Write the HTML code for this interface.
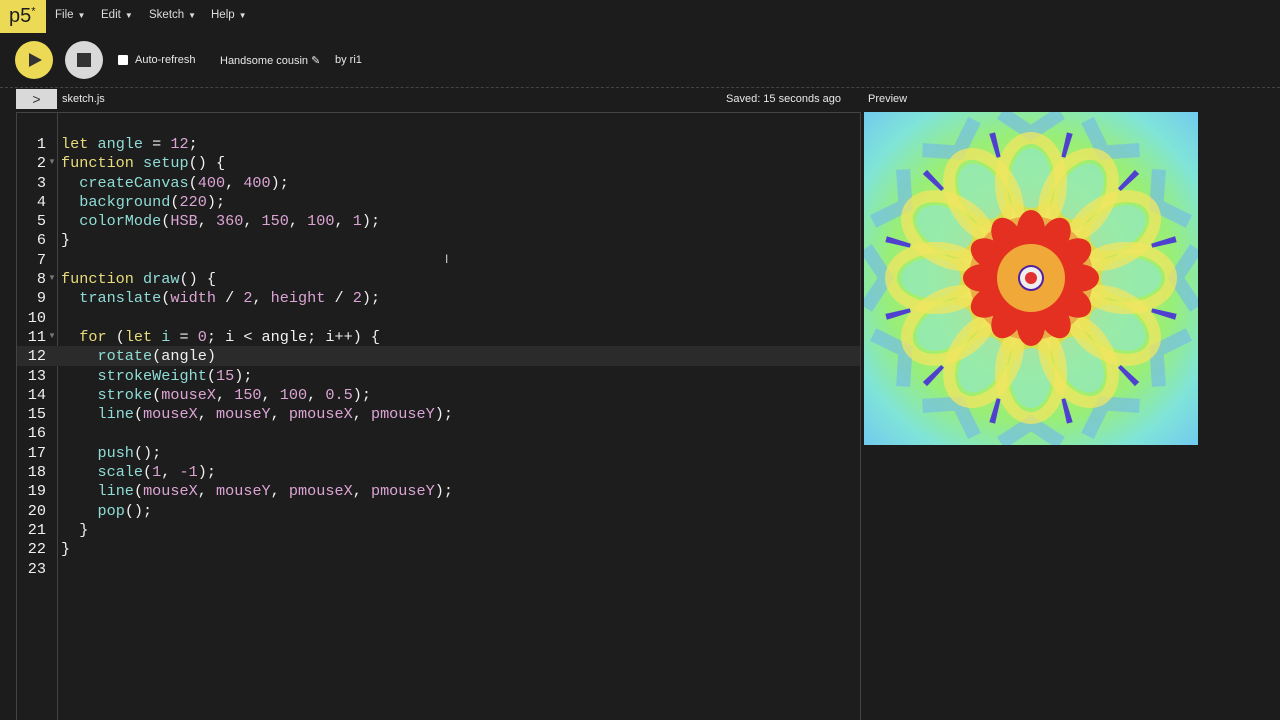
<!DOCTYPE html>
<html><head><meta charset="utf-8"><style>
*{margin:0;padding:0;box-sizing:border-box}
body{width:1280px;height:720px;background:#1c1c1c;font-family:"Liberation Sans",sans-serif;color:#e8e8e8;position:relative;overflow:hidden}
.abs{position:absolute}
.logo{left:0;top:0;width:46px;height:33px;background:#ecd956;color:#1c1c1c;font-size:20px;padding:5px 0 0 9px}
.logo sup{font-size:11px}
.menu{top:9px;font-size:11.5px;color:#ddd}
.menu span{font-size:8px;margin-left:4px}
.btn{border-radius:50%;width:38px;height:38px;top:41px}
.code{left:61px;top:135px;font-family:"Liberation Mono",monospace;font-size:15.2px;line-height:19.3px;white-space:pre;color:#f0f0f0}
.nums{left:18px;width:28px;top:135px;font-family:"Liberation Mono",monospace;font-size:15.2px;line-height:19.3px;text-align:right;color:#f0f0f0}
.k{color:#e8dc7a}.f{color:#8fdcd6}.n{color:#dca4d4}
.tri{font-size:8px;color:#777;left:48px}
</style></head><body>
<div class="abs logo">p5<sup>*</sup></div>
<div class="abs menu" style="left:55px">File<span>▼</span></div>
<div class="abs menu" style="left:101px">Edit<span>▼</span></div>
<div class="abs menu" style="left:149px">Sketch<span>▼</span></div>
<div class="abs menu" style="left:211px">Help<span>▼</span></div>
<div class="abs btn" style="left:15px;background:#ecd956"><div class="abs" style="left:14px;top:12px;border-left:13px solid #333;border-top:7px solid transparent;border-bottom:7px solid transparent"></div></div>
<div class="abs btn" style="left:65px;background:#d9d9d9"><div class="abs" style="left:12px;top:12px;width:14px;height:14px;background:#333"></div></div>
<div class="abs" style="left:118px;top:55px;width:10px;height:10px;background:#fff;border-radius:1px"></div>
<div class="abs" style="left:135px;top:54px;font-size:11px">Auto-refresh</div>
<div class="abs" style="left:220px;top:54px;font-size:11px">Handsome cousin ✎</div>
<div class="abs" style="left:335px;top:54px;font-size:11px">by ri1</div>
<div class="abs" style="left:0;top:87px;width:1280px;border-top:1px dashed #444"></div>
<div class="abs" style="left:16px;top:89px;width:41px;height:20px;background:#d9d9d9;color:#333;font-size:14px;text-align:center;line-height:20px">&gt;</div>
<div class="abs" style="left:62px;top:93px;font-size:11px">sketch.js</div>
<div class="abs" style="left:726px;top:93px;font-size:11px">Saved: 15 seconds ago</div>
<div class="abs" style="left:868px;top:93px;font-size:11px">Preview</div>
<div class="abs" style="left:16px;top:112px;width:845px;height:608px;background:#1d1d1d;border:1px solid #444;border-bottom:none"></div>
<div class="abs" style="left:57px;top:113px;width:1px;height:607px;background:#444"></div>
<div class="abs" style="left:17px;top:346px;width:843px;height:20px;background:#2b2b2b"></div>
<div class="abs nums">1<br>2<br>3<br>4<br>5<br>6<br>7<br>8<br>9<br>10<br>11<br>12<br>13<br>14<br>15<br>16<br>17<br>18<br>19<br>20<br>21<br>22<br>23</div>
<div class="abs tri" style="top:157px">▼</div>
<div class="abs tri" style="top:273px">▼</div>
<div class="abs tri" style="top:331px">▼</div>
<div class="abs code"><span class="k">let</span> <span class="f">angle</span> = <span class="n">12</span>;
<span class="k">function</span> <span class="f">setup</span>() {
  <span class="f">createCanvas</span>(<span class="n">400</span>, <span class="n">400</span>);
  <span class="f">background</span>(<span class="n">220</span>);
  <span class="f">colorMode</span>(<span class="n">HSB</span>, <span class="n">360</span>, <span class="n">150</span>, <span class="n">100</span>, <span class="n">1</span>);
}

<span class="k">function</span> <span class="f">draw</span>() {
  <span class="f">translate</span>(<span class="n">width</span> / <span class="n">2</span>, <span class="n">height</span> / <span class="n">2</span>);

  <span class="k">for</span> (<span class="k">let</span> <span class="f">i</span> = <span class="n">0</span>; i &lt; angle; i++) {
    <span class="f">rotate</span>(angle)
    <span class="f">strokeWeight</span>(<span class="n">15</span>);
    <span class="f">stroke</span>(<span class="n">mouseX</span>, <span class="n">150</span>, <span class="n">100</span>, <span class="n">0.5</span>);
    <span class="f">line</span>(<span class="n">mouseX</span>, <span class="n">mouseY</span>, <span class="n">pmouseX</span>, <span class="n">pmouseY</span>);

    <span class="f">push</span>();
    <span class="f">scale</span>(<span class="n">1</span>, <span class="n">-1</span>);
    <span class="f">line</span>(<span class="n">mouseX</span>, <span class="n">mouseY</span>, <span class="n">pmouseX</span>, <span class="n">pmouseY</span>);
    <span class="f">pop</span>();
  }
}
</div>
<svg class="abs" style="left:864px;top:112px" width="334" height="333" viewBox="0 0 334 333">
<defs>
<radialGradient id="bg" cx="167" cy="166" r="240" gradientUnits="userSpaceOnUse">
<stop offset="0" stop-color="#f08030"/><stop offset="0.22" stop-color="#f0d040"/><stop offset="0.4" stop-color="#b0f060"/><stop offset="0.6" stop-color="#98ee78"/><stop offset="0.8" stop-color="#80e4d8"/><stop offset="1" stop-color="#70c8f0"/></radialGradient>
<ellipse id="yp" cx="0" cy="-95" rx="30" ry="45" fill="none" stroke="#f2e660" stroke-width="12" opacity="0.75"/>
<ellipse id="cp" cx="0" cy="-100" rx="20" ry="30" fill="#8ee8c8" opacity="0.7"/>
<ellipse id="rp" cx="0" cy="-48" rx="14" ry="20" fill="#e43020"/>
<path id="bp" d="M-3 -150 L3 -150 L2 -125 L-2 -125Z" fill="#5040d0"/>
<path id="op" d="M-30 -165 L0 -145 L30 -165" fill="none" stroke="#70b8f0" stroke-width="14" opacity="0.6"/>
</defs>
<rect width="334" height="333" fill="url(#bg)"/>
<g transform="translate(167,166)">
<g><use href="#op"/><use href="#op" transform="rotate(30)"/><use href="#op" transform="rotate(60)"/><use href="#op" transform="rotate(90)"/><use href="#op" transform="rotate(120)"/><use href="#op" transform="rotate(150)"/><use href="#op" transform="rotate(180)"/><use href="#op" transform="rotate(210)"/><use href="#op" transform="rotate(240)"/><use href="#op" transform="rotate(270)"/><use href="#op" transform="rotate(300)"/><use href="#op" transform="rotate(330)"/></g>
<g><use href="#cp"/><use href="#cp" transform="rotate(30)"/><use href="#cp" transform="rotate(60)"/><use href="#cp" transform="rotate(90)"/><use href="#cp" transform="rotate(120)"/><use href="#cp" transform="rotate(150)"/><use href="#cp" transform="rotate(180)"/><use href="#cp" transform="rotate(210)"/><use href="#cp" transform="rotate(240)"/><use href="#cp" transform="rotate(270)"/><use href="#cp" transform="rotate(300)"/><use href="#cp" transform="rotate(330)"/></g>
<g><use href="#yp"/><use href="#yp" transform="rotate(30)"/><use href="#yp" transform="rotate(60)"/><use href="#yp" transform="rotate(90)"/><use href="#yp" transform="rotate(120)"/><use href="#yp" transform="rotate(150)"/><use href="#yp" transform="rotate(180)"/><use href="#yp" transform="rotate(210)"/><use href="#yp" transform="rotate(240)"/><use href="#yp" transform="rotate(270)"/><use href="#yp" transform="rotate(300)"/><use href="#yp" transform="rotate(330)"/></g>
<g transform="rotate(15)"><use href="#bp"/><use href="#bp" transform="rotate(30)"/><use href="#bp" transform="rotate(60)"/><use href="#bp" transform="rotate(90)"/><use href="#bp" transform="rotate(120)"/><use href="#bp" transform="rotate(150)"/><use href="#bp" transform="rotate(180)"/><use href="#bp" transform="rotate(210)"/><use href="#bp" transform="rotate(240)"/><use href="#bp" transform="rotate(270)"/><use href="#bp" transform="rotate(300)"/><use href="#bp" transform="rotate(330)"/></g>
<circle r="62" fill="#e88838" opacity="0.6"/>
<g><use href="#rp"/><use href="#rp" transform="rotate(30)"/><use href="#rp" transform="rotate(60)"/><use href="#rp" transform="rotate(90)"/><use href="#rp" transform="rotate(120)"/><use href="#rp" transform="rotate(150)"/><use href="#rp" transform="rotate(180)"/><use href="#rp" transform="rotate(210)"/><use href="#rp" transform="rotate(240)"/><use href="#rp" transform="rotate(270)"/><use href="#rp" transform="rotate(300)"/><use href="#rp" transform="rotate(330)"/></g>
<circle r="34" fill="#f0a838"/>
<circle r="13" fill="#5020a0"/><circle r="11" fill="#eee"/><circle r="6" fill="#e03030"/>
</g>
</svg>
<div class="abs" style="left:445px;top:252px;font-size:12px;color:#ccc">I</div>
</body></html>
